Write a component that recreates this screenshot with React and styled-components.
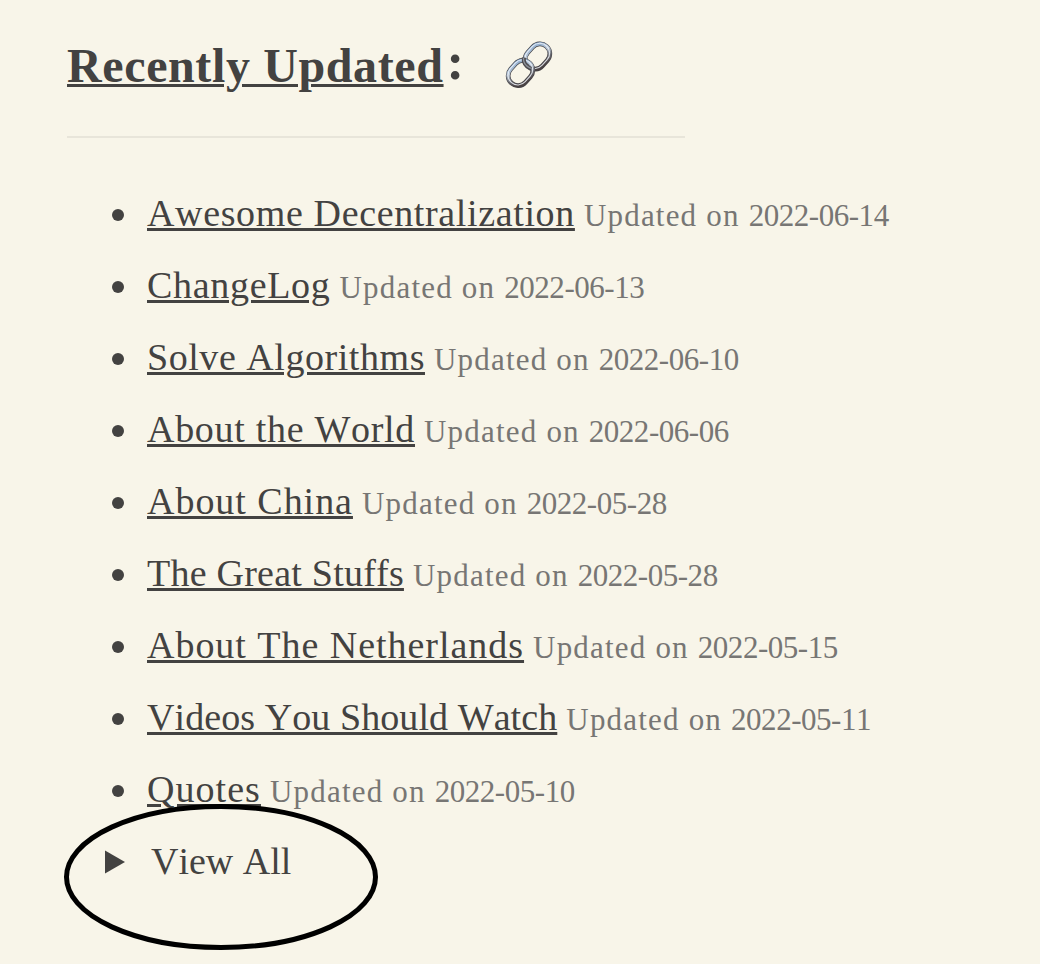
import React from "react";
import styled, { createGlobalStyle } from "styled-components";

const GlobalStyle = createGlobalStyle`
  * { box-sizing: border-box; }
  body {
    margin: 0;
    background: #f8f5e9;
    color: #434241;
    font-family: "Liberation Serif", serif;
    font-kerning: none;
  }
`;

const Page = styled.main`
  min-height: 964px;
  padding: 30px 67px 0;
  overflow: hidden;
`;

const Heading = styled.h2`
  display: flex;
  align-items: center;
  height: 72px;
  margin: 0;
  font-size: 48px;
  line-height: 72px;
  white-space: nowrap;
`;

const HeadingLink = styled.a`
  letter-spacing: 0.62px;
  text-decoration: underline;
  text-decoration-thickness: 3px;
  text-underline-offset: 2px;
`;

const Colon = styled.span`
  width: 61px;
  padding: 0 0 9px 3px;
  font-size: 53px;
  line-height: 63px;
`;

const LinkIcon = styled.svg`
  width: 48px;
  height: 48px;
  margin-bottom: 3px;
`;

const Rule = styled.hr`
  width: 618px;
  height: 2px;
  margin: 34px 0 39px;
  border: 0;
  background: #e8e5da;
`;

const List = styled.ul`
  margin: 0;
  padding: 0 0 0 45px;
  list-style: none;
`;

const Row = styled.li`
  display: flex;
  align-items: baseline;
  height: 72px;
  font-size: 38px;
  line-height: 72px;
  white-space: nowrap;
`;

const Bullet = styled.span`
  align-self: center;
  width: 12px;
  height: 12px;
  margin: 4px 23px 0 0;
  border-radius: 50%;
  background: currentColor;
`;

const NoteLink = styled.a`
  letter-spacing: ${(p) => p.$tracking}px;
  text-decoration: underline;
  text-decoration-thickness: 3px;
  text-underline-offset: 2px;
`;

const Updated = styled.small`
  margin-left: 9px;
  color: #777674;
  font-size: 31px;
  letter-spacing: 1.2px;
`;

const Day = styled.time`
  letter-spacing: -0.46px;
`;

const Details = styled.div`
  position: relative;
  display: flex;
  align-items: baseline;
  height: 72px;
  padding-left: 38px;
  font-size: 38px;
  line-height: 72px;
`;

const Marker = styled.svg`
  align-self: center;
  width: 20px;
  height: 24px;
  margin: 2px 26px 0 0;
`;

const Ring = styled.svg`
  position: absolute;
  left: -5px;
  top: -23px;
  width: 318px;
  height: 150px;
`;

const notes = [
  ["Awesome Decentralization", "2022-06-14", 0.64],
  ["ChangeLog", "2022-06-13", 0.69],
  ["Solve Algorithms", "2022-06-10", 0.55],
  ["About the World", "2022-06-06", 0.7],
  ["About China", "2022-05-28", 0.97],
  ["The Great Stuffs", "2022-05-28", 0.23],
  ["About The Netherlands", "2022-05-15", 0.97],
  ["Videos You Should Watch", "2022-05-11", 0.08],
  ["Quotes", "2022-05-10", 1.05],
];

function Chain() {
  const ring = { x: -10.2, y: -14, width: 20.4, height: 28, rx: 10.2, fill: "none" };
  const link = (
    <>
      <rect {...ring} stroke="#424145" strokeWidth="4.8" />
      <rect {...ring} stroke="url(#steel)" strokeWidth="3.6" />
      <rect {...ring} x={-10.8} y={-14.4} stroke="#f1f6fb" strokeWidth="1.1" opacity="0.85" />
    </>
  );
  return (
    <LinkIcon viewBox="0 0 48 48">
      <defs>
        <linearGradient id="steel" x1="0" y1="0" x2="1" y2="0.6">
          <stop offset="0" stopColor="#85a8cf" />
          <stop offset="0.45" stopColor="#b7c5d5" />
          <stop offset="0.75" stopColor="#68686f" />
          <stop offset="1" stopColor="#4a4243" />
        </linearGradient>
      </defs>
      <g transform="translate(32.5 15.5) rotate(42) scale(.97)">{link}</g>
      <g transform="translate(15.5 32) rotate(42) scale(.97)">{link}</g>
      <path d="M18.8 16.5 C18.3 21 20.5 25.5 26 28" fill="none" stroke="#4c4a4e" strokeWidth="4" />
      <path d="M18.5 17 C18.1 21 20.5 25 25.8 27.3" fill="none" stroke="#8d9199" strokeWidth="1.4" />
    </LinkIcon>
  );
}

export default function App() {
  return (
    <>
      <GlobalStyle />
      <Page>
        <Heading>
          <HeadingLink>Recently Updated</HeadingLink>
          <Colon>:</Colon>
          <Chain />
        </Heading>
        <Rule />
        <List>
          {notes.map(([title, day, tracking]) => (
            <Row key={title}>
              <Bullet />
              <NoteLink $tracking={tracking}>{title}</NoteLink>
              <Updated>
                Updated on <Day>{day}</Day>
              </Updated>
            </Row>
          ))}
        </List>
        <Details>
          <Marker viewBox="0 0 20 24">
            <path d="M0 .5 20 12 0 23.5Z" fill="currentColor" />
          </Marker>
          <span>View All</span>
          <Ring viewBox="0 0 318 150">
            <ellipse cx="159" cy="75" rx="154.5" ry="70.5" fill="none" stroke="#000" strokeWidth="5" />
          </Ring>
        </Details>
      </Page>
    </>
  );
}
